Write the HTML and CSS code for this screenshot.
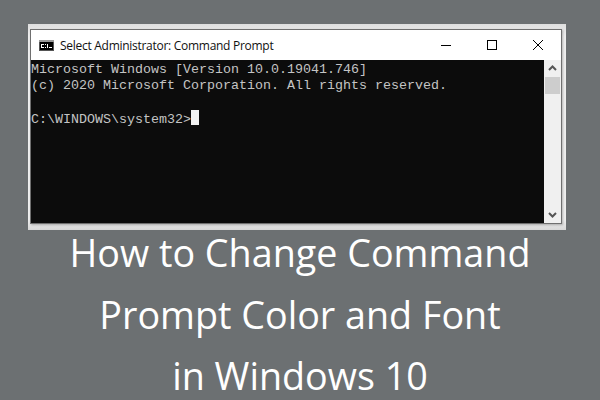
FILE: index.html
```html
<!DOCTYPE html>
<html lang="en">
<head>
<meta charset="utf-8">
<title>How to Change Command Prompt Color and Font in Windows 10</title>
<link rel="stylesheet" href="styles.css">
</head>
<body>
<div class="frame">
  <div class="window">
    <div class="titlebar">
      <svg class="appicon" width="15" height="11" viewBox="0 0 15 11">
        <rect width="15" height="11" fill="#555"/>
        <rect x="0" y="0" width="15" height="2" fill="#9a9a9a"/>
        <rect x="1" y="2" width="13" height="8" fill="#000"/>
        <path d="M2 4h3v1H2zM2 7h3v1H2zM2 5h1v2H2zM6 4h1v1H6zM6 7h1v1H6zM8 4h1v4H8zM10 7h3v1h-3z" fill="#fff"/>
      </svg>
      <span class="title">Select Administrator: Command Prompt</span>
      <div class="controls">
        <svg class="ctl" width="46" height="14" viewBox="0 0 46 14"><path d="M18 7.5h10" stroke="#000" fill="none"/></svg>
        <svg class="ctl" width="46" height="14" viewBox="0 0 46 14"><rect x="18.5" y="2.5" width="9" height="9" stroke="#000" fill="none"/></svg>
        <svg class="ctl" width="46" height="14" viewBox="0 0 46 14"><path d="M18 2l10 10M28 2L18 12" stroke="#000" fill="none"/></svg>
      </div>
    </div>
    <div class="body">
      <pre class="console">Microsoft Windows [Version 10.0.19041.746]
(c) 2020 Microsoft Corporation. All rights reserved.

C:\WINDOWS\system32&gt;<span class="cursor"></span></pre>
      <div class="scrollbar">
        <svg width="17" height="17" viewBox="0 0 17 17"><path d="M5 10l3.5-3.5L12 10" stroke="#555" stroke-width="2" fill="none"/></svg>
        <div class="thumb"></div>
        <div class="track"></div>
        <svg width="17" height="17" viewBox="0 0 17 17"><path d="M5 7l3.5 3.5L12 7" stroke="#555" stroke-width="2" fill="none"/></svg>
      </div>
    </div>
  </div>
</div>
<h1 class="headline">How to Change Command<br>Prompt Color and Font<br>in Windows 10</h1>
</body>
</html>
```
FILE: styles.css
```css
* { box-sizing: border-box; }
html, body { margin: 0; padding: 0; }
body {
  width: 600px;
  height: 400px;
  overflow: hidden;
  background: #6c7072;
  padding-top: 24px;
  font-family: "Open Sans", sans-serif;
}
.frame {
  width: 538px;
  height: 206px;
  margin-left: 28px;
  padding: 5px 4px 6px 2px;
  background: linear-gradient(#dedede, #eeeeee 12px, #eeeeee 196px, #d8d8d8);
}
.window {
  height: 100%;
  display: flex;
  flex-direction: column;
  border: 1px solid #6f6f6f;
  background: #fff;
  box-shadow: 1px 1px 2px rgba(0, 0, 0, 0.25);
}
.titlebar {
  height: 30px;
  display: flex;
  align-items: center;
  padding-left: 8px;
  flex: none;
}
.appicon { flex: none; margin-right: 6px; }
.title {
  font-family: "Open Sans", sans-serif;
  font-size: 12px;
  letter-spacing: -0.28px;
  color: #111;
  white-space: nowrap;
}
.controls {
  margin-left: auto;
  display: flex;
  align-items: center;
}
.ctl { display: block; }
.body { flex: 1; display: flex; min-height: 0; }
.console {
  flex: 1;
  margin: 0;
  padding: 2px 0 0 0;
  background: #0c0c0c;
  color: #c4c4c4;
  font-family: "Liberation Mono", monospace;
  font-size: 13.33px;
  line-height: 16px;
  overflow: hidden;
}
.cursor {
  display: inline-block;
  width: 8px;
  height: 15px;
  background: #f2f2f2;
  vertical-align: -2px;
}
.scrollbar {
  width: 17px;
  flex: none;
  display: flex;
  flex-direction: column;
  background: #f0f0f0;
}
.scrollbar svg { display: block; flex: none; }
.thumb { height: 17px; margin: 0 1px; background: #cdcdcd; flex: none; }
.track { flex: 1; }
.headline {
  margin: -8px 0 0;
  font-family: "Open Sans", sans-serif;
  font-weight: 400;
  font-size: 37.7px;
  line-height: 61.5px;
  color: #fff;
  text-align: center;
  white-space: nowrap;
}
```
